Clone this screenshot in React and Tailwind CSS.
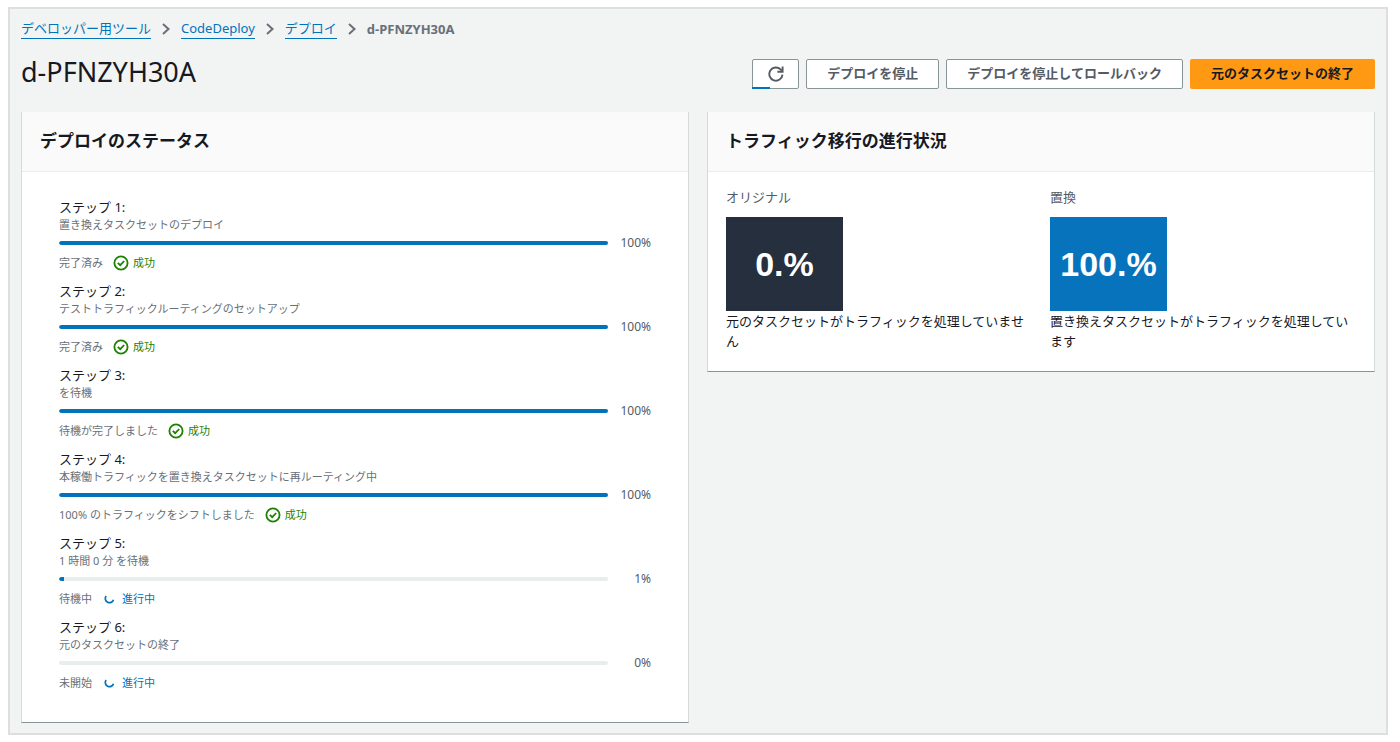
import React from "react";

const steps = [
  { title: "ステップ 1:", desc: "置き換えタスクセットのデプロイ", percent: 100, note: "完了済み", done: true },
  { title: "ステップ 2:", desc: "テストトラフィックルーティングのセットアップ", percent: 100, note: "完了済み", done: true },
  { title: "ステップ 3:", desc: "を待機", percent: 100, note: "待機が完了しました", done: true },
  { title: "ステップ 4:", desc: "本稼働トラフィックを置き換えタスクセットに再ルーティング中", percent: 100, note: "100% のトラフィックをシフトしました", done: true },
  { title: "ステップ 5:", desc: "1 時間 0 分 を待機", percent: 1, note: "待機中", done: false },
  { title: "ステップ 6:", desc: "元のタスクセットの終了", percent: 0, note: "未開始", done: false },
];

const crumbs = ["デベロッパー用ツール", "CodeDeploy", "デプロイ"];

function Chevron() {
  return (
    <svg aria-hidden="true" viewBox="0 0 8 12" className="h-3 w-2 shrink-0 fill-none stroke-[#687078] stroke-2">
      <path d="M1 1l5.5 5L1 11" />
    </svg>
  );
}

function CheckCircle() {
  return (
    <svg aria-hidden="true" viewBox="0 0 16 16" className="size-4 shrink-0 fill-none stroke-[#1d8102]">
      <circle cx="8" cy="8" r="6.6" strokeWidth="1.8" />
      <path d="M4.8 7.9l2.4 2.3 4-4.2" strokeWidth="1.8" />
    </svg>
  );
}

function Spinner() {
  return (
    <svg aria-hidden="true" viewBox="0 0 16 16" className="size-4 shrink-0 fill-none stroke-[#0073bb]">
      <path d="M4.1 5A4.2 4.2 0 1 0 11.5 8.7" strokeWidth="1.7" />
    </svg>
  );
}

function Refresh() {
  return (
    <svg aria-hidden="true" viewBox="0 0 16 16" className="size-4 fill-none stroke-[#545b64]">
      <path d="M14.5 8.6A6.6 6.6 0 1 1 12.6 3.4L14.4 5.2" strokeWidth="1.9" />
      <path d="M14.6 0.6v5.1H9.4" strokeWidth="1.9" />
    </svg>
  );
}

function Panel({ title, children }) {
  return (
    <section className="border-x border-b border-x-[#d5dbdb] border-b-[#879596] bg-white">
      <header className="border-b border-[#eaeded] bg-[#fafafa] px-[18px] pt-[15px] pb-4">
        <h2 className="text-[17px] leading-7 font-bold">{title}</h2>
      </header>
      {children}
    </section>
  );
}

function Step({ step, id }) {
  return (
    <li className="flex flex-col">
      <h3 id={id} className="text-[13px] leading-5">{step.title}</h3>
      <p className="text-[11px] leading-4 text-[#687078]">{step.desc}</p>
      <div className="flex items-center gap-3 text-xs leading-5 text-[#545b64]">
        <div
          role="progressbar"
          aria-labelledby={id}
          aria-valuenow={step.percent}
          className="h-1 grow overflow-hidden rounded-full bg-[#eaeded]"
        >
          <div className="h-full rounded-l-full bg-[#0073bb]" style={{ width: `${step.percent}%` }} />
        </div>
        <span className="w-[31px] text-right">{step.percent}%</span>
      </div>
      <p className="flex items-center gap-2.5 text-[11px] leading-5 text-[#687078]">
        {step.note}
        {step.done ? (
          <span className="flex items-center gap-1 text-[#1d8102]">
            <CheckCircle />
            成功
          </span>
        ) : (
          <span className="flex items-center gap-1 text-[#0073bb]">
            <Spinner />
            進行中
          </span>
        )}
      </p>
    </li>
  );
}

function Traffic({ label, value, tone, text }) {
  return (
    <div>
      <h3 className="text-[13px] leading-5 text-[#545b64]">{label}</h3>
      <div className={`mt-2.5 flex h-[94px] w-[117px] items-center justify-center font-['Liberation_Sans',sans-serif] text-[34px] font-bold text-white ${tone}`}>
        {value}
      </div>
      <p className="text-[13px] leading-5">{text}</p>
    </div>
  );
}

const plainButton = "h-[30px] rounded-xs border border-[#879596] bg-white px-5 text-[13px] font-bold text-[#545b64]";

export default function App() {
  return (
    <div lang="ja" className="min-h-screen bg-white pt-[7px] pr-3 pb-2 pl-2 font-['Noto_Sans','Noto_Sans_CJK_JP',sans-serif] text-[#16191f]">
      <main className="border-2 border-[#dedede] bg-[#f2f3f3] px-[11px] pt-[9px] pb-2.5">
        <nav aria-label="パンくずリスト" className="flex items-center gap-[11px] text-[13px] leading-5">
          {crumbs.map((c) => (
            <React.Fragment key={c}>
              <a href="#" className="border-b border-[#0073bb] text-[#0073bb]">{c}</a>
              <Chevron />
            </React.Fragment>
          ))}
          <span className="font-bold text-[#687078]">d-PFNZYH30A</span>
        </nav>

        <div className="mt-5 flex items-start justify-between">
          <h1 className="text-[27px] leading-[26px]">d-PFNZYH30A</h1>
          <div className="flex gap-[7px]">
            <button type="button" aria-label="更新" className="relative flex h-[30px] w-[47px] items-center justify-center rounded-xs border border-[#879596] bg-white">
              <Refresh />
              <span className="absolute -bottom-px -left-px h-0.5 w-[18px] bg-[#0073bb]" />
            </button>
            <button type="button" className={plainButton}>デプロイを停止</button>
            <button type="button" className={plainButton}>デプロイを停止してロールバック</button>
            <button type="button" className="h-[30px] rounded-xs bg-[#ff9914] px-[21px] text-[13px] font-bold">元のタスクセットの終了</button>
          </div>
        </div>

        <div className="mt-[23px] grid grid-cols-2 items-start gap-[18px]">
          <Panel title="デプロイのステータス">
            <ol className="flex flex-col gap-2 px-[37px] pt-[25px] pb-[29px]">
              {steps.map((s, i) => (
                <Step key={s.title} step={s} id={`step-${i + 1}`} />
              ))}
            </ol>
          </Panel>
          <Panel title="トラフィック移行の進行状況">
            <div className="grid grid-cols-2 gap-[18px] px-[18px] pt-[15px] pb-5">
              <Traffic label="オリジナル" value="0.%" tone="bg-[#262f3d]" text="元のタスクセットがトラフィックを処理していません" />
              <Traffic label="置換" value="100.%" tone="bg-[#0773bc]" text="置き換えタスクセットがトラフィックを処理しています" />
            </div>
          </Panel>
        </div>
      </main>
    </div>
  );
}
